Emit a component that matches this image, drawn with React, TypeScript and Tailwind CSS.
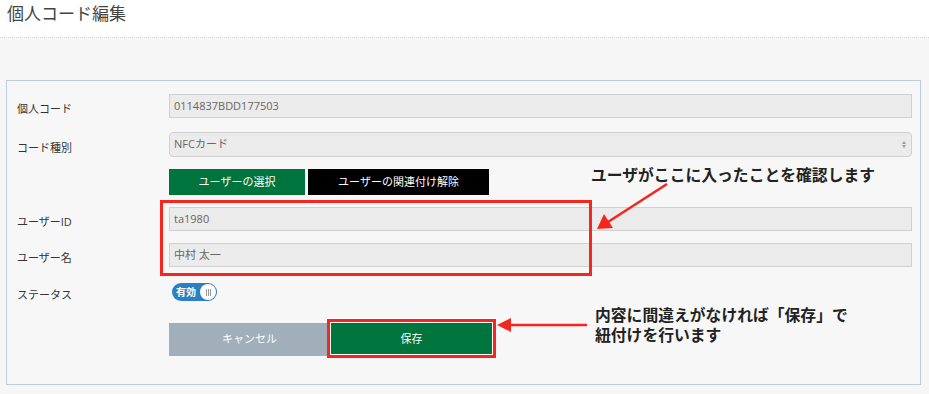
import React from "react";

const font = { fontFamily: '"Open Sans","Noto Sans CJK JP",sans-serif' };

function Label({ children }: { children: React.ReactNode }) {
  return <div className="w-[162px] shrink-0 pl-[10px] pt-[6px] text-[11px] leading-[16px] text-[#333]">{children}</div>;
}

function Input({ value }: { value: string }) {
  return (
    <div className="flex h-[24px] flex-1 items-center border border-[#d0d0d0] bg-[#ebebeb] pl-[4px] text-[11px] text-[#666]">
      {value}
    </div>
  );
}

export default function App() {
  return (
    <div className="relative h-[394px] w-[929px] overflow-hidden bg-[#f6f6f6]" style={font}>
      <div className="h-[38px] border-b border-dotted border-[#cfcfcf] bg-white pl-[7px] pt-[2px]">
        <div className="text-[17px] leading-[24px] text-[#444]">個人コード編集</div>
      </div>
      <div className="px-[6px] pt-[42px]">
        <div className="h-[305px] w-[915px] border border-[#bdcddb] bg-[#f7f7f7] pr-[8px] pt-[13px]">
          <div className="flex items-center">
            <Label>個人コード</Label>
            <Input value="0114837BDD177503" />
          </div>
          <div className="mt-[14px] flex items-center">
            <Label>コード種別</Label>
            <div className="flex h-[25px] flex-1 items-center justify-between rounded-[4px] border border-[#d0d0d0] bg-[#ebebeb] pl-[4px] pr-[5px] text-[11px] text-[#666]">
              <span>NFCカード</span>
              <span className="flex flex-col items-center gap-[1px]">
                <span className="h-0 w-0 border-x-[2.5px] border-b-[3px] border-x-transparent border-b-[#999]" />
                <span className="h-0 w-0 border-x-[2.5px] border-t-[3px] border-x-transparent border-t-[#999]" />
              </span>
            </div>
          </div>
          <div className="mt-[12px] flex">
            <div className="w-[162px] shrink-0" />
            <div className="flex h-[26px] w-[136px] items-center justify-center bg-[#00743d] text-[11px] text-white">ユーザーの選択</div>
            <div className="ml-[3px] flex h-[26px] w-[181px] items-center justify-center bg-black text-[11px] text-white">ユーザーの関連付け解除</div>
          </div>
          <div className="mt-[12px] flex items-center">
            <Label>ユーザーID</Label>
            <Input value="ta1980" />
          </div>
          <div className="mt-[12px] flex items-center">
            <Label>ユーザー名</Label>
            <Input value="中村 太一" />
          </div>
          <div className="mt-[14px] flex items-center">
            <Label>ステータス</Label>
            <div className="ml-[3px] flex h-[18px] w-[45px] items-center justify-between rounded-full bg-[#2b7fc2] pl-[4px] pr-[1px]">
              <span className="text-[10px] font-bold leading-none text-white">有効</span>
              <span className="flex h-[16px] w-[16px] items-center justify-center gap-[1px] rounded-full bg-white">
                <span className="h-[7px] w-[1px] bg-[#999]" />
                <span className="h-[7px] w-[1px] bg-[#999]" />
                <span className="h-[7px] w-[1px] bg-[#999]" />
              </span>
            </div>
          </div>
          <div className="mt-[20px] flex">
            <div className="w-[162px] shrink-0" />
            <div className="flex h-[33px] w-[161px] items-center justify-center bg-[#a0afb9] text-[11px] text-white">キャンセル</div>
            <div className="ml-[1px] flex h-[33px] w-[161px] items-center justify-center bg-[#00743d] text-[11px] text-white">保存</div>
          </div>
        </div>
      </div>

      {/* annotations */}
      <div className="absolute left-[160px] top-[200px] h-[76px] w-[432px] border-[3px] border-[#f5261d]" />
      <div className="absolute left-[327px] top-[319px] h-[39px] w-[169px] border-[3px] border-[#f5261d]">
        <div className="h-full w-full border border-white" />
      </div>
      <div className="absolute left-[591px] top-[164px] text-[15.8px] font-bold leading-[22px] text-[#222]" style={{ fontFamily: '"Noto Sans CJK JP",sans-serif' }}>
        ユーザがここに入ったことを確認します
      </div>
      <div className="absolute left-[595px] top-[305px] text-[15.8px] font-bold leading-[20px] text-[#222]" style={{ fontFamily: '"Noto Sans CJK JP",sans-serif' }}>
        <div>内容に間違えがなければ「保存」で</div>
        <div>紐付けを行います</div>
      </div>
      <svg className="absolute left-0 top-0" width="929" height="394" viewBox="0 0 929 394">
        <line x1="667" y1="184" x2="608" y2="222" stroke="#f5261d" strokeWidth="2.5" />
        <polygon points="597,229 604,214 613,228" fill="#f5261d" />
        <line x1="587" y1="325" x2="508" y2="325" stroke="#f5261d" strokeWidth="2.5" />
        <polygon points="497,325 511,318 511,332" fill="#f5261d" />
      </svg>
    </div>
  );
}
